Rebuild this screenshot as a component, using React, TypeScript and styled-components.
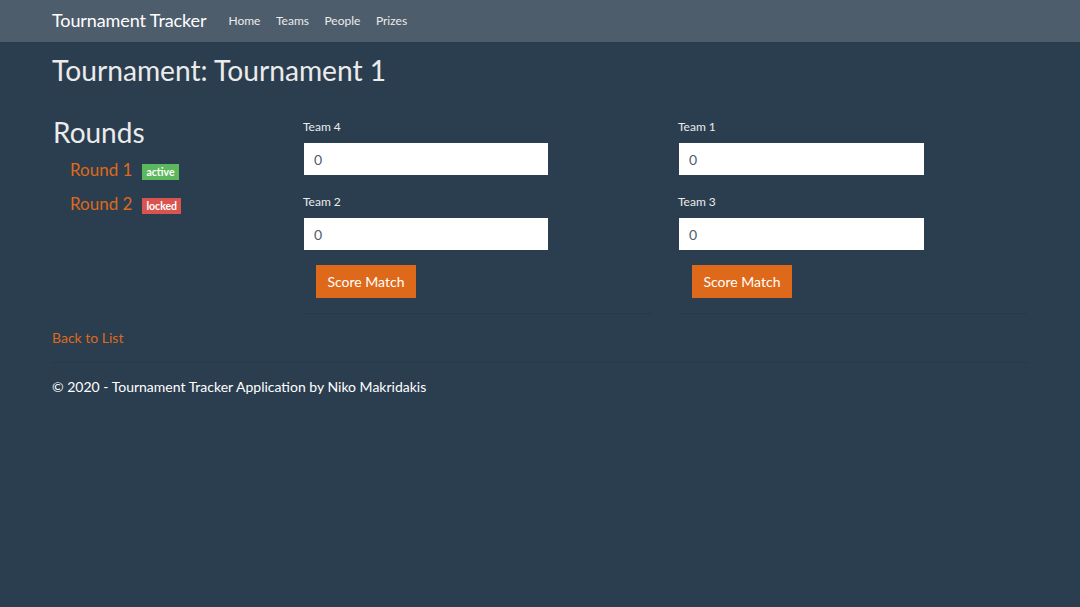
import React from "react";
import styled, { createGlobalStyle } from "styled-components";

const Global = createGlobalStyle`
  html, body { margin: 0; padding: 0; background: #2b3e50; }
  body { font-family: Lato, "Open Sans", sans-serif; color: #ebebeb; font-size: 14px; line-height: 1.42857; }
  * { box-sizing: border-box; }
`;

const Navbar = styled.nav`
  height: 42px;
  background: #4e5d6c;
`;

const NavInner = styled.div`
  width: 976px;
  margin: 0 auto;
  height: 100%;
  display: flex;
  align-items: center;
`;

const Brand = styled.a`
  font-size: 18px;
  color: #ffffff;
  text-decoration: none;
  margin-right: 22px;
  letter-spacing: -0.1px;
`;

const NavLink = styled.a`
  font-size: 12px;
  color: #ebebeb;
  text-decoration: none;
  margin-right: 15.5px;
`;

const Container = styled.main`
  width: 976px;
  margin: 0 auto;
`;

const Title = styled.h2`
  font-size: 28.2px;
  font-weight: 400;
  margin: 12px 0 24px;
  line-height: 32px;
  color: #ebebeb;
`;

const Layout = styled.div`
  display: grid;
  grid-template-columns: 225px 349px 349px;
  column-gap: 26px;
`;

const RoundsCol = styled.section``;

const RoundsHeading = styled.h3`
  font-size: 28px;
  font-weight: 400;
  margin: 5px 0 4px 1px;
  line-height: 34px;
  color: #ebebeb;
`;

const RoundList = styled.ul`
  list-style: none;
  margin: 0;
  padding: 0 0 0 18px;
`;

const RoundItem = styled.li`
  display: flex;
  align-items: center;
  height: 34px;
`;

const RoundLink = styled.a`
  font-size: 17px;
  color: #df691a;
  text-decoration: none;
  margin-right: 10px;
`;

const Badge = styled.span<{ $kind: "success" | "danger" }>`
  display: inline-block;
  font-size: 10.5px;
  font-weight: 700;
  line-height: 1;
  padding: 3px 4px 2.5px;
  color: #fff;
  background: ${(p) => (p.$kind === "success" ? "#5cb85c" : "#d9534f")};
  margin-top: 3px;
`;

const Match = styled.form`
  padding-top: 10px;
  border-bottom: 1px solid #26384a;
  padding-bottom: 15px;
`;

const Field = styled.div<{ $gap?: number }>`
  margin-bottom: 10px;
  margin-top: ${(p) => p.$gap ?? 0}px;
`;

const Label = styled.label`
  display: block;
  font-size: 12px;
  line-height: 14px;
  margin: 0 0 9px;
  color: #ebebeb;
`;

const Input = styled.input<{ $w: number }>`
  display: block;
  width: ${(p) => p.$w}px;
  height: 32px;
  border: none;
  padding: 0 10px;
  font-family: Lato, sans-serif;
  font-size: 14px;
  color: #4e5d6c;
  background: #fff;
  margin-left: 1px;
  outline: none;
`;

const Button = styled.button<{ $ml: number }>`
  display: block;
  margin-left: ${(p) => p.$ml}px;
  margin-top: 15px;
  width: 100px;
  height: 33px;
  border: none;
  background: #df691a;
  color: #fff;
  font-family: Lato, sans-serif;
  font-size: 14px;
  padding: 0;
`;

const BackLink = styled.a`
  display: block;
  margin-top: 14px;
  font-size: 14px;
  color: #df691a;
  text-decoration: none;
  line-height: 20px;
`;

const Rule = styled.hr`
  border: none;
  border-top: 1px solid #26384a;
  margin: 14px 0 14px;
`;

const Footer = styled.footer`
  font-size: 14px;
  color: #ffffff;
  line-height: 20px;
`;

const matches = [
  { a: "Team 4", b: "Team 2", ml: 13, w: 244 },
  { a: "Team 1", b: "Team 3", ml: 14, w: 245 },
];

export default function App() {
  return (
    <>
      <Global />
      <Navbar>
        <NavInner>
          <Brand href="#">Tournament Tracker</Brand>
          <NavLink href="#">Home</NavLink>
          <NavLink href="#">Teams</NavLink>
          <NavLink href="#">People</NavLink>
          <NavLink href="#">Prizes</NavLink>
        </NavInner>
      </Navbar>
      <Container>
        <Title>Tournament: Tournament 1</Title>
        <Layout>
          <RoundsCol>
            <RoundsHeading>Rounds</RoundsHeading>
            <RoundList>
              <RoundItem>
                <RoundLink href="#">Round 1</RoundLink>
                <Badge $kind="success">active</Badge>
              </RoundItem>
              <RoundItem>
                <RoundLink href="#">Round 2</RoundLink>
                <Badge $kind="danger">locked</Badge>
              </RoundItem>
            </RoundList>
          </RoundsCol>
          {matches.map((m) => (
            <Match key={m.a} onSubmit={(e) => e.preventDefault()}>
              <Field>
                <Label>{m.a}</Label>
                <Input $w={m.w} defaultValue="0" />
              </Field>
              <Field $gap={20}>
                <Label>{m.b}</Label>
                <Input $w={m.w} defaultValue="0" />
              </Field>
              <Button type="submit" $ml={m.ml}>Score Match</Button>
            </Match>
          ))}
        </Layout>
        <BackLink href="#">Back to List</BackLink>
        <Rule />
        <Footer>© 2020 - Tournament Tracker Application by Niko Makridakis</Footer>
      </Container>
    </>
  );
}
